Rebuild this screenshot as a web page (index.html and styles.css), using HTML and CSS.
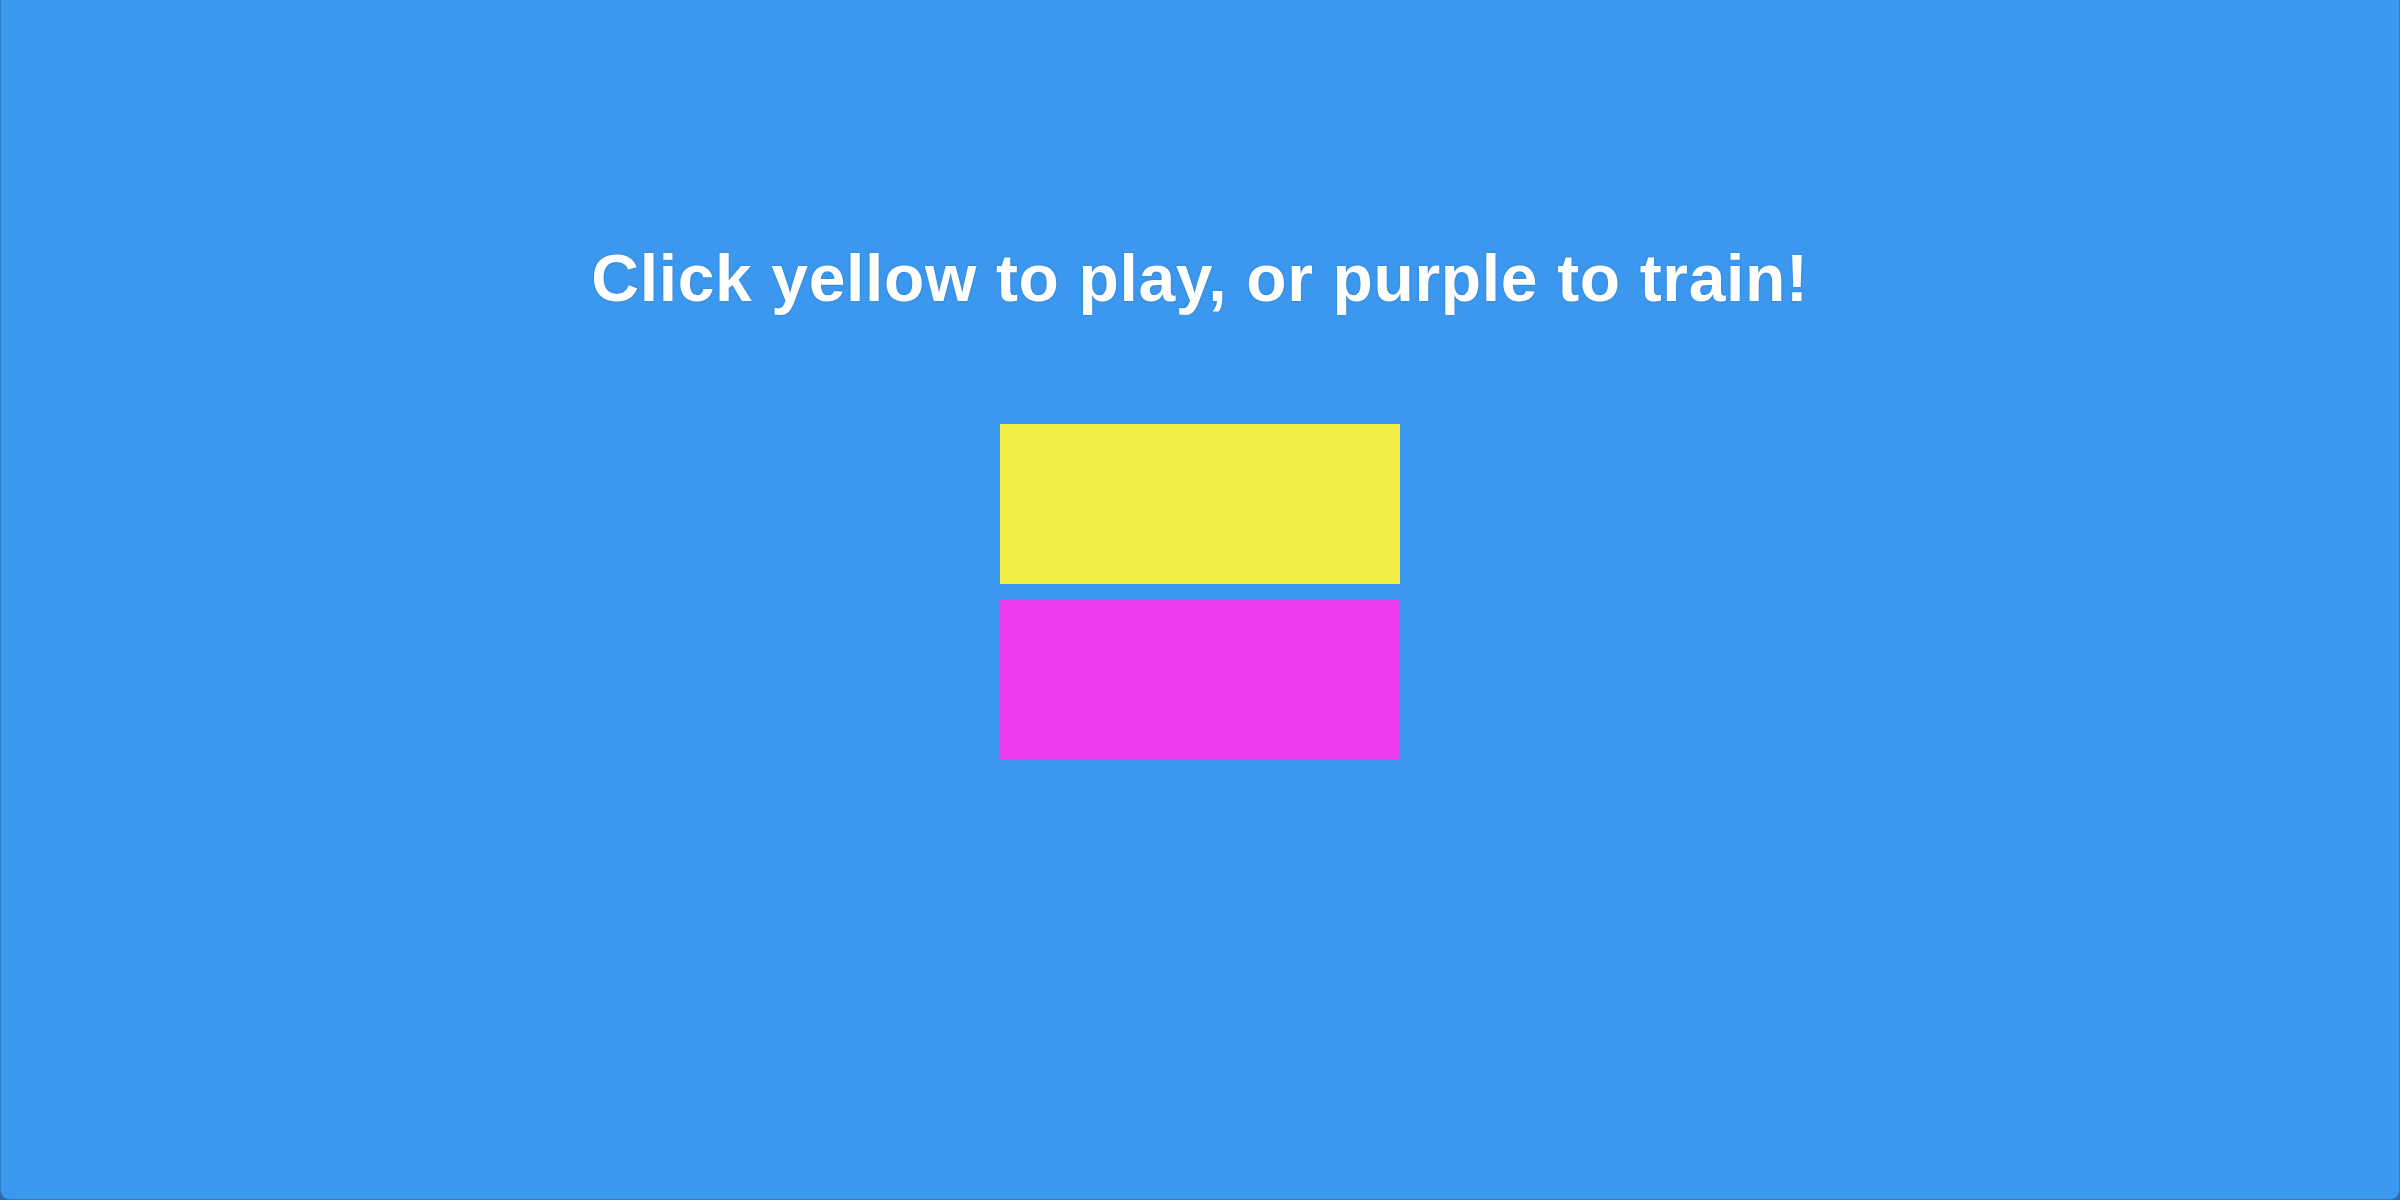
FILE: index.html
```html
<!DOCTYPE html>
<html>
<head>
<meta charset="utf-8">
<link rel="stylesheet" href="styles.css">
</head>
<body>
<main class="screen">
  <h1 class="title">Click yellow to play, or purple to train!</h1>
  <div class="choices">
    <div class="choice choice-yellow"></div>
    <div class="choice choice-purple"></div>
  </div>
</main>
</body>
</html>
```
FILE: styles.css
```css
html, body {
  margin: 0;
  padding: 0;
  height: 100%;
}
body {
  background: #2a6aa8;
  font-family: "Liberation Sans", Arial, sans-serif;
}
.screen {
  height: 1200px;
  display: flex;
  flex-direction: column;
  align-items: center;
  border-radius: 0 0 10px 10px;
  background: #3b98ee;
  box-sizing: border-box;
  border: 1px solid #2f7fc9;
  border-top: none;
}
.title {
  margin: 240px 0 0 0;
  height: 76px;
  line-height: 76px;
  font-size: 66px;
  font-weight: bold;
  letter-spacing: 0.65px;
  color: #ffffff;
  text-shadow: 0 0 2px rgba(40, 90, 150, 0.6);
}
.choices {
  margin-top: 108px;
  display: flex;
  flex-direction: column;
  gap: 16px;
}
.choice {
  width: 400px;
  height: 160px;
}
.choice-yellow {
  background: #f0ee45;
}
.choice-purple {
  background: #ee3aee;
}
```
